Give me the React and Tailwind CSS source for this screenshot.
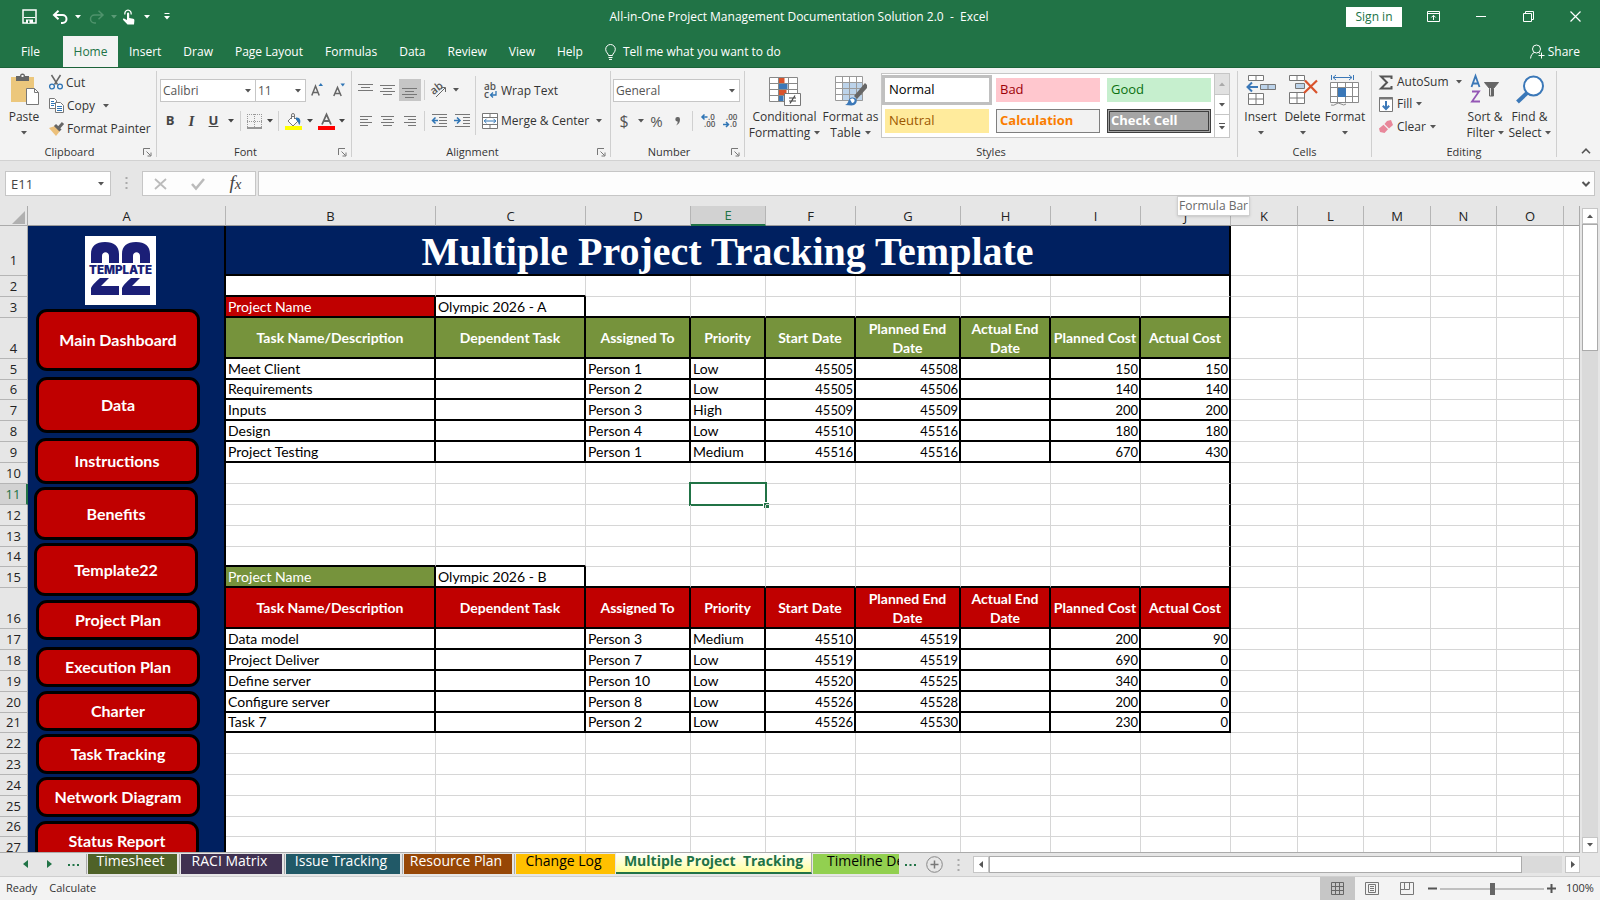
import React from "react";

const Caret = ({ className = "" }) => (
  <svg width="6" height="4" viewBox="0 0 6 4" className={"shrink-0 " + className} fill="currentColor" aria-hidden="true">
    <path d="M0 0h6L3 3.4z" />
  </svg>
);

const Svg = ({ w = 16, h = 16, children, className = "" }) => (
  <svg width={w} height={h} viewBox={`0 0 ${w} ${h}`} fill="none" className={"shrink-0 overflow-visible " + className} aria-hidden="true">
    {children}
  </svg>
);

const Launcher = ({ name }) => (
  <button aria-label={name} className="absolute right-1 bottom-0">
    <Svg w={9} h={9}>
      <path d="M.5 7V.5H7M3.5 3.5l4 4M8 4.5V8H4.500" stroke="#777" />
    </Svg>
  </button>
);

function Group({ label, width, launcher, children }) {
  return (
    <section aria-label={label} className={"relative flex shrink-0 flex-col border-r border-[#cfcfcf] " + width}>
      <div className="flex h-[72px]">{children}</div>
      <div className={"h-[14px] text-center text-[11px] leading-[18px] text-[#333] " + (launcher ? "pr-[17px]" : "")}>{label}</div>
      {launcher && <Launcher name={label + " settings"} />}
    </section>
  );
}

const Sep = ({ className = "h-5" }) => <span className={"w-px shrink-0 bg-[#d0d0d0] " + className} />;

const IconBtn = ({ label, width = "w-[22px]", className = "", children }) => (
  <button aria-label={label} className={"flex h-[22px] shrink-0 items-center justify-center " + width + " " + className}>
    {children}
  </button>
);

const Lines = ({ rows }) => (
  <Svg w={16} h={16}>
    {rows.map(([x1, x2, y], i) => (
      <path key={i} d={`M${x1} ${y + 0.5}H${x2}`} stroke="#777" />
    ))}
  </Svg>
);

function Picker({ label, value, className }) {
  return (
    <label className={"relative block h-[23px] border border-[#c6c6c6] bg-white " + className}>
      <span className="sr-only">{label}</span>
      <select defaultValue={value} className="block h-full w-full appearance-none bg-transparent px-[2px] text-[12px] leading-[18px] text-[#555]">
        <option>{value}</option>
      </select>
      <Caret className="pointer-events-none absolute top-[9px] right-1 text-[#555]" />
    </label>
  );
}

const MENU = ["Insert", "Draw", "Page Layout", "Formulas", "Data", "Review", "View", "Help"];

function TitleBar() {
  return (
    <header className="flex h-[36px] shrink-0 items-center bg-[#217346] text-white">
      <div className="flex w-[340px] items-center pb-[3px] pl-[22px]">
        <button aria-label="Save" className="w-[30px]">
          <Svg w={15} h={15}>
            <path d="M1 1h13v13H1z" stroke="#fff" strokeWidth="1.500" />
            <path d="M2 8.500h11" stroke="#fff" />
            <path d="M4 10.500h7V14H4z" fill="#fff" />
            <path d="M6 11.500h1.500V14H6z" fill="#217346" />
          </Svg>
        </button>
        <button aria-label="Undo" className="flex w-[36px] items-center gap-[6px]">
          <Svg w={17} h={14}>
            <path d="M2 5h8.500a3.800 3.800 0 0 1 0 8H9M6.500.8L2 5l4.500 4.200" stroke="#fff" strokeWidth="2" />
          </Svg>
          <Caret />
        </button>
        <button aria-label="Redo" className="flex w-[34px] items-center gap-[6px] text-[#5a9a76]">
          <Svg w={17} h={14}>
            <path d="M15 5H6.500a3.800 3.800 0 0 0 0 8H8M10.500.8L15 5l-4.500 4.200" stroke="#4f936c" strokeWidth="1.500" />
          </Svg>
          <Caret />
        </button>
        <button aria-label="Touch mode" className="flex w-[42px] items-center gap-2">
          <Svg w={14} h={16}>
            <path d="M3 5.500a3.200 3.200 0 1 1 6 0" stroke="#fff" strokeWidth="1.300" />
            <path d="M5 4.500a1 1 0 0 1 2.200 0V9l4 .8q1.300.3 1.200 1.600L12 15.500H5.500L1.200 11q-.8-1 .2-1.400 1-.3 2 .6L5 11z" fill="#fff" />
          </Svg>
          <Caret />
        </button>
        <button aria-label="Customize toolbar">
          <Svg w={6} h={7}>
            <path d="M.5.5h5" stroke="#fff" />
            <path d="M0 3h6L3 6.500z" fill="#fff" />
          </Svg>
        </button>
      </div>
      <h1 className="flex-1 pb-[2px] text-center text-[12px] whitespace-pre">All-in-One Project Management Documentation Solution 2.0  -  Excel</h1>
      <div className="flex w-[342px] items-center justify-end pb-[3px]">
        <button className="h-[20px] w-[56px] bg-white text-[12px] leading-[18px] text-[#217346]">Sign in</button>
        <button aria-label="Ribbon display options" className="ml-6 flex w-[14px] justify-center">
          <Svg w={13} h={11}>
            <path d="M.5.5h12v10H.5zM.5 2.500h12" stroke="#fff" />
            <path d="M6.500 9V4.500M4.300 6.500l2.200-2.200 2.200 2.200" stroke="#fff" />
          </Svg>
        </button>
        <button aria-label="Minimize" className="ml-[35px] flex w-[12px] justify-center">
          <Svg w={10} h={2}><path d="M0 .5h10" stroke="#fff" /></Svg>
        </button>
        <button aria-label="Restore" className="ml-[35px] flex w-[12px] justify-center">
          <Svg w={11} h={11}><path d="M.5 2.500h8v8h-8zM2.500 2.500v-2h8v8h-2" stroke="#fff" /></Svg>
        </button>
        <button aria-label="Close" className="mr-[19px] ml-[35px] flex w-[12px] justify-center">
          <Svg w={11} h={11}><path d="M.5.5l10 10M10.500.5l-10 10" stroke="#fff" strokeWidth="1.200" /></Svg>
        </button>
      </div>
    </header>
  );
}

function MenuBar() {
  return (
    <nav className="flex h-[31px] shrink-0 items-stretch bg-[#217346] text-[12px] text-white">
      <button className="w-[63px] pr-[2px]">File</button>
      <button className="w-[55px] bg-[#f3f3f3] text-[#217346]">Home</button>
      <div className="flex gap-[22px] pl-[11px]">
        {MENU.map((m) => (
          <button key={m}>{m}</button>
        ))}
      </div>
      <button className="ml-[22px] flex items-center gap-[7px]">
        <Svg w={11} h={16}>
          <path d="M3.500 11.500c0-2-2.800-3-2.800-6.200a4.800 4.800 0 0 1 9.600 0c0 3.200-2.800 4.200-2.800 6.200zM3.500 13.500h4M4 15.400h3" stroke="#fff" />
        </Svg>
        Tell me what you want to do
      </button>
      <button className="mr-5 ml-auto flex items-center gap-[3px]">
        <Svg w={15} h={15}>
          <circle cx="6.500" cy="5" r="4" stroke="#fff" />
          <path d="M.6 14.500c.2-3.500 2-5.500 4-6M8.500 8.500l1.500 1M11.500 8.500v6M8.500 11.500h6" stroke="#fff" />
        </Svg>
        Share
      </button>
    </nav>
  );
}

const Clipboard = () => (
  <Group label="Clipboard" width="w-[157px]" launcher>
    <button className="flex w-[48px] flex-col items-center pt-[2px] text-[12px] leading-[16px] text-[#333]">
      <Svg w={30} h={33} className="mb-[3px]">
        <path d="M2 4h23v25H2z" fill="#ecc77c" />
        <path d="M7 3h4a2.500 2.500 0 0 1 5 0h4v5H7z" fill="#666" />
        <path d="M12.500 2h2v2h-2z" fill="#f3f3f3" />
        <path d="M17.500 15.500h8l4 4v12h-12z" fill="#fff" stroke="#777" />
        <path d="M25.500 15.500v4h4" stroke="#777" />
      </Svg>
      Paste
      <Caret className="mt-[6px] text-[#555]" />
    </button>
    <div className="flex flex-col text-[12px] text-[#333]">
      <button className="flex h-[23px] items-center gap-[3px] pl-px">
        <Svg w={14} h={15}>
          <path d="M2.500 0l6 9.500M11.500 0l-6 9.500" stroke="#666" strokeWidth="1.500" />
          <circle cx="3" cy="11.500" r="2.400" stroke="#2f75b5" strokeWidth="1.300" />
          <circle cx="11" cy="11.500" r="2.400" stroke="#2f75b5" strokeWidth="1.300" />
        </Svg>
        Cut
      </button>
      <button className="flex h-[23px] items-center gap-[3px] pl-px">
        <Svg w={15} h={15}>
          <path d="M.5.500h5l2 2v8h-7z" fill="#fff" stroke="#777" />
          <path d="M2 3.500h3M2 5.500h4M2 7.500h3" stroke="#2f75b5" />
          <path d="M6.500 4.500h5l3 3v7h-8z" fill="#fff" stroke="#777" />
          <path d="M8 8.500h5M8 10.500h5M8 12.500h5" stroke="#2f75b5" />
        </Svg>
        Copy
        <Caret className="ml-[5px] text-[#555]" />
      </button>
      <button className="flex h-[23px] items-center gap-[3px] pl-px">
        <Svg w={15} h={14}>
          <path d="M0 6l6-2 5 5-4 5z" fill="#ecc07a" />
          <path d="M6 3l5.500 5.500M10 5.500L14 1" stroke="#666" strokeWidth="3" />
        </Svg>
        Format Painter
      </button>
    </div>
  </Group>
);

const FontGroup = () => (
  <Group label="Font" width="w-[195px]" launcher>
    <div className="flex flex-col gap-[8px] pt-[8px] pl-[3px]">
      <div className="flex">
        <Picker label="Font name" value="Calibri" className="w-[96px]" />
        <Picker label="Font size" value="11" className="-ml-px w-[51px]" />
        <IconBtn label="Increase font size" width="w-[22px]">
          <Svg w={13} h={15}>
            <path d="M.8 12.500L4.500 3l3.700 9.500M2 9.500h5" stroke="#666" strokeWidth="1.500" />
            <path d="M7.500 3L9.800 0 12 3z" fill="#2f75b5" />
          </Svg>
        </IconBtn>
        <IconBtn label="Decrease font size" width="w-[22px]">
          <Svg w={13} h={15}>
            <path d="M.8 13L4.500 4.500 8.200 13M2 10.500h5" stroke="#666" strokeWidth="1.500" />
            <path d="M7.500.500h4.500L9.800 3.500z" fill="#2f75b5" />
          </Svg>
        </IconBtn>
      </div>
      <div className="flex items-center text-[#444]">
        <IconBtn label="Bold" width="w-[20px]"><b className="text-[13px]">B</b></IconBtn>
        <IconBtn label="Italic" width="w-[23px]"><i className="font-['Liberation_Serif',serif] text-[15px] font-bold">I</i></IconBtn>
        <IconBtn label="Underline" width="w-[21px]"><span className="text-[13px] font-bold underline">U</span></IconBtn>
        <IconBtn label="Underline style" width="w-[14px]"><Caret /></IconBtn>
        <Sep className="mx-[2px] h-5" />
        <IconBtn label="Borders">
          <Svg w={15} h={15}>
            <path d="M.5 0v14M14.500 0v14M7.500 0v14M0 .5h15M0 7.500h15" stroke="#999" strokeDasharray="1 1" />
            <path d="M0 14h15" stroke="#777" strokeWidth="1.500" />
          </Svg>
        </IconBtn>
        <IconBtn label="Border style" width="w-[10px]"><Caret /></IconBtn>
        <Sep className="mx-[3px] h-5" />
        <IconBtn label="Fill color" width="w-[23px]">
          <Svg w={17} h={17}>
            <path d="M3 8l5-5 5 5-5 5z" fill="#fff" stroke="#777" />
            <path d="M6.500 6V2a1.500 1.500 0 0 1 3 0v4" stroke="#777" />
            <path d="M11 4.500c4-.5 5.500 3 3.500 7.500-1.500-1.500-1-4-3.500-5z" fill="#2f75b5" />
            <path d="M0 13h17v4H0z" fill="#ff0" />
          </Svg>
        </IconBtn>
        <IconBtn label="Fill options" width="w-[9px]"><Caret /></IconBtn>
        <IconBtn label="Font color" width="w-[24px]">
          <Svg w={17} h={17}>
            <path d="M4 11.500L8.500 1.500 13 11.500M5.500 8h6" stroke="#666" strokeWidth="1.800" />
            <path d="M0 13h17v4H0z" fill="#f00" />
          </Svg>
        </IconBtn>
        <IconBtn label="Font color options" width="w-[8px]"><Caret /></IconBtn>
      </div>
    </div>
  </Group>
);

const AlignmentGroup = () => (
  <Group label="Alignment" width="w-[259px]" launcher>
    <div className="flex flex-col gap-[9px] pt-[8px] pl-[3px] text-[#555]">
      <div className="flex items-center">
        <IconBtn label="Top align"><Lines rows={[[0, 15, 2], [3, 12, 5], [0, 15, 8]]} /></IconBtn>
        <IconBtn label="Middle align"><Lines rows={[[0, 15, 3], [3, 12, 6], [0, 15, 9], [3, 12, 12]]} /></IconBtn>
        <IconBtn label="Bottom align" className="bg-[#c6c6c6]"><Lines rows={[[0, 15, 6], [3, 12, 9], [0, 15, 12], [3, 12, 15]]} /></IconBtn>
        <Sep className="ml-[3px] h-5" />
        <IconBtn label="Orientation" width="w-[28px]">
          <Svg w={20} h={20}>
            <text x="2" y="12" fontSize="11" fontWeight="600" fill="#555" transform="rotate(-38 8 10)">ab</text>
            <path d="M7 17L16 8M12 7.500h4.500V12" stroke="#666" />
          </Svg>
        </IconBtn>
        <Caret />
      </div>
      <div className="flex items-center">
        <IconBtn label="Align left"><Lines rows={[[2, 14, 3], [2, 10, 6], [2, 14, 9], [2, 10, 12]]} /></IconBtn>
        <IconBtn label="Center"><Lines rows={[[1, 14, 3], [3, 12, 6], [1, 14, 9], [3, 12, 12]]} /></IconBtn>
        <IconBtn label="Align right"><Lines rows={[[2, 14, 3], [6, 14, 6], [2, 14, 9], [6, 14, 12]]} /></IconBtn>
        <Sep className="ml-[3px] h-5" />
        <IconBtn label="Decrease indent" width="w-[28px]">
          <Svg>
            <path d="M1 1.500h15M8 4.500h8M8 7.500h8M8 10.500h8M1 13.500h15" stroke="#777" />
            <path d="M7 7.500H1.500M4.500 4.500l-3 3 3 3" stroke="#2f75b5" strokeWidth="1.500" />
          </Svg>
        </IconBtn>
        <IconBtn label="Increase indent" width="w-[18px]">
          <Svg>
            <path d="M1 1.500h15M9 4.500h7M9 7.500h7M9 10.500h7M1 13.500h15" stroke="#777" />
            <path d="M0 7.500h6M3 4.500l3 3-3 3" stroke="#2f75b5" strokeWidth="1.500" />
          </Svg>
        </IconBtn>
      </div>
    </div>
    <Sep className="mt-[5px] ml-[4px] h-[59px]" />
    <div className="flex flex-col gap-[9px] pt-[8px] pl-[6px] text-[12px] text-[#333]">
      <button className="flex h-[22px] items-center gap-[3px] pt-px">
        <Svg w={16} h={18}>
          <text x="2" y="8" fontSize="10" fontWeight="600" fill="#555">ab</text>
          <text x="2" y="16" fontSize="10" fontWeight="600" fill="#555">c</text>
          <path d="M14 9v4H8.500M11 10.500L8.500 13l2.500 2.500" stroke="#2f75b5" strokeWidth="1.300" />
        </Svg>
        Wrap Text
      </button>
      <button className="flex h-[22px] items-center gap-[3px]">
        <Svg w={16} h={16}>
          <path d="M.5.500h15v15H.5zM.5 4.500h15M.5 11.500h15M8 .5v4M8 11.500v4" fill="#fff" stroke="#777" />
          <path d="M2 8h12M4.500 5.800L2.300 8l2.200 2.200M11.500 5.800L13.700 8l-2.200 2.200" stroke="#2f75b5" />
        </Svg>
        Merge &amp; Center
        <Caret className="ml-1 text-[#555]" />
      </button>
    </div>
  </Group>
);

const NumberGroup = () => (
  <Group label="Number" width="w-[134px]" launcher>
    <div className="flex flex-col gap-[8px] pt-[8px] pl-[2px] text-[#555]">
      <Picker label="Number format" value="General" className="w-[127px]" />
      <div className="flex items-center">
        <IconBtn label="Currency"><span className="text-[16px]">$</span></IconBtn>
        <IconBtn label="Currency options" width="w-[11px]"><Caret /></IconBtn>
        <IconBtn label="Percent" width="w-[21px]"><span className="text-[15px]">%</span></IconBtn>
        <IconBtn label="Comma style">
          <Svg w={6} h={9}><path d="M2.500 0a2.200 2.200 0 0 1 2.500 2.200C5 5 4 7 1 8.500 2.500 6.500 3 5 2.500 4.400a2.200 2.200 0 1 1 0-4.400z" fill="#666" /></Svg>
        </IconBtn>
        <Sep className="mr-[5px] ml-[3px] h-5" />
        <IconBtn label="Increase decimal">
          <Svg w={16} h={18}>
            <text x="7" y="8" fontSize="8" fontWeight="600" fill="#555">.0</text>
            <text x="3" y="15" fontSize="8" fontWeight="600" fill="#555">.00</text>
            <path d="M6.500 5H1M3.500 2.500L1 5l2.500 2.500" stroke="#2f75b5" strokeWidth="1.500" />
          </Svg>
        </IconBtn>
        <IconBtn label="Decrease decimal">
          <Svg w={16} h={18}>
            <text x="3" y="8" fontSize="8" fontWeight="600" fill="#555">.00</text>
            <text x="7" y="15" fontSize="8" fontWeight="600" fill="#555">.0</text>
            <path d="M0 12.500h5.500M3 10l2.500 2.500L3 15" stroke="#2f75b5" strokeWidth="1.500" />
          </Svg>
        </IconBtn>
      </div>
    </div>
  </Group>
);

const BIG = "flex flex-col items-center pt-[4px] text-[12px] leading-[16px] text-[#333]";

const SWATCHES = [
  ["Normal", "pl-[4px] bg-white text-black outline-[3px] outline-[#c0c0c0]"],
  ["Bad", "pl-[4px] bg-[#ffc7ce] text-[#9c0006]"],
  ["Good", "pl-[4px] bg-[#c6efce] text-[#0a7010]"],
  ["Neutral", "pl-[4px] bg-[#ffeb9c] text-[#9c5700]"],
  ["Calculation", "pl-[3px] border border-[#7f7f7f] bg-[#f2f2f2] font-bold text-[#fa7d00]"],
  ["Check Cell", "pl-px border-[3px] border-double border-[#3f3f3f] bg-[#a5a5a5] font-bold text-white"],
];

const StylesGroup = () => (
  <Group label="Styles" width="w-[493px]">
    <button className={BIG + " w-[79px]"}>
      <Svg w={32} h={31} className="mb-[3px]">
        <path d="M.5 2.500h28v24H.5z" fill="#fff" />
        <path d="M9.500 3h6v5h-6zM9.500 14h8v6h-8z" fill="#d9532c" />
        <path d="M9.500 8h9v6h-9zM9.500 20h5v6h-5z" fill="#3b78b8" />
        <path d="M.5 2.500h28v24H.5zM.5 8.500h28M.5 14.500h28M.5 20.500h28M9.500 2.500v24M19.500 2.500v24" stroke="#888" />
        <path d="M15.500 18.500h16v12h-16z" fill="#fff" stroke="#777" />
        <path d="M20 23h7M20 26h7M26 20.500l-5 8" stroke="#444" strokeWidth="1.200" />
      </Svg>
      Conditional
      <span className="flex items-center gap-1">Formatting<Caret className="text-[#555]" /></span>
    </button>
    <button className={BIG + " w-[53px] whitespace-nowrap"}>
      <Svg w={32} h={31} className="mb-[3px]">
        <path d="M.5 1.500h27v24H.5z" fill="#fff" />
        <path d="M7 8h21v18H7z" fill="#bcd3ea" />
        <path d="M.5 1.500h27v24H.5zM.5 7.500h27M.5 13.500h27M.5 19.500h27M7.500 1.500v24M14.500 1.500v24M21.500 1.500v24" stroke="#9a9a9a" />
        <path d="M19 21L30 8l2 2v3L22 24z" fill="#666" />
        <path d="M10 30c3-1 3-4 4.500-6 2-2.500 6-1.500 7 .5 1 2.500-1 6-5 6z" fill="#3b78b8" />
        <path d="M15 24.500c1.500-1.500 4-1 4.500.5s-1 3-2.500 3z" fill="#fff" />
      </Svg>
      Format as
      <span className="flex items-center gap-1">Table<Caret className="text-[#555]" /></span>
    </button>
    <div className="mt-[2px] ml-[4px] flex h-[65px] border border-[#c6c6c6] bg-white">
      <div className="grid grid-cols-3 gap-x-[7px] gap-y-[6px] px-[3px] py-[4px]">
        {SWATCHES.map(([name, cls]) => (
          <button key={name} className={"flex h-[24px] w-[104px] items-center text-[13px] " + cls}>
            {name}
          </button>
        ))}
      </div>
      <div className="flex w-[15px] flex-col divide-y divide-[#c6c6c6] border-l border-[#c6c6c6] text-[#555]">
        <button aria-label="Scroll styles up" className="flex h-[21px] items-center justify-center bg-[#e1e1e1] text-[#aaa]"><Caret className="rotate-180" /></button>
        <button aria-label="Scroll styles down" className="flex h-[20px] items-center justify-center"><Caret /></button>
        <button aria-label="More styles" className="flex flex-1 flex-col items-center justify-center gap-[2px]"><span className="h-px w-[6px] bg-[#555]" /><Caret /></button>
      </div>
    </div>
  </Group>
);

const CellsGroup = () => (
  <Group label="Cells" width="w-[134px]">
    <button className={BIG + " ml-px w-[43px]"}>
      <Svg w={30} h={31} className="mb-[3px]">
        <path d="M2.500.500h15v5h-15zM10 .5v5M2.500 18.500h15v11h-15zM10 18.500v11M2.500 24h15" fill="#fff" stroke="#777" />
        <path d="M14.500 9.500h15v5h-15zM22 9.500v5" fill="#bcd3ea" stroke="#777" />
        <path d="M12 12H1.500M6 7.500L1.500 12 6 16.500" stroke="#3b78b8" strokeWidth="2" />
      </Svg>
      Insert<Caret className="mt-[6px] text-[#555]" />
    </button>
    <button className={BIG + " w-[41px]"}>
      <Svg w={30} h={31} className="mb-[3px]">
        <path d="M1.500.500h15v5h-15zM9 .5v5M1.500 17.500h15v11h-15zM9 17.500v11M1.500 23h15" fill="#fff" stroke="#777" />
        <path d="M7.500 8.500h9v5h-9z" fill="#bcd3ea" stroke="#777" />
        <path d="M17 5.500l12 12.500M29 5.500L16 18" stroke="#d9532c" strokeWidth="2.200" />
      </Svg>
      Delete<Caret className="mt-[6px] text-[#555]" />
    </button>
    <button className={BIG + " w-[44px]"}>
      <Svg w={30} h={31} className="mb-[3px]">
        <path d="M.5 7.500h28v20H.5zM.5 12.500h28M.5 21.500h28M7.500 7.500v20M15.500 7.500v20M22.500 7.500v20" fill="#fff" stroke="#8a8a8a" />
        <path d="M8 13h8v9H8z" fill="#3b78b8" />
        <path d="M1.500 0v5M23.500 0v5M3 2.500h19M6 0L3 2.500 6 5M19 0l3 2.500L19 5" stroke="#3b78b8" />
        <path d="M1 30q3 1 5-1t5 0 5 0" stroke="#8a8a8a" />
      </Svg>
      Format<Caret className="mt-[6px] text-[#555]" />
    </button>
  </Group>
);

const EditingGroup = () => (
  <Group label="Editing" width="w-[185px]">
    <div className="flex w-[90px] flex-col pl-[7px] text-[12px] text-[#333]">
      <button className="flex h-[22px] items-center gap-[4px]">
        <Svg w={14} h={15}><path d="M12.500 4V1.500H2L8 7.500 2 13.500h10.500V11" stroke="#555" strokeWidth="2" /></Svg>
        AutoSum<Caret className="ml-[3px] text-[#555]" />
      </button>
      <button className="flex h-[22px] items-center gap-[4px]">
        <Svg w={14} h={15}>
          <path d="M.5.500h13v14H.5z" fill="#fff" stroke="#777" /><path d="M0 1.500h14" stroke="#777" strokeWidth="2" />
          <path d="M7 4v8M3.800 8.800L7 12l3.200-3.200" stroke="#3b78b8" strokeWidth="2" />
        </Svg>
        Fill<Caret className="text-[#555]" />
      </button>
      <button className="flex h-[23px] items-center gap-[4px]">
        <Svg w={14} h={13}>
          <path d="M8 1l4-1 2 5-4 3.500L5.500 4z" fill="#e8879a" /><path d="M4.500 4.800L9 9.300 5.500 13 1 12 0 8.500z" fill="#e8879a" />
        </Svg>
        Clear<Caret className="text-[#555]" />
      </button>
    </div>
    <button className={BIG + " w-[46px] whitespace-nowrap"}>
      <Svg w={30} h={31} className="mb-[3px]">
        <path d="M1.500 12L5.500 1l4 11M3 8.500h5" stroke="#3b78b8" strokeWidth="1.800" />
        <path d="M2 16.500h7L2 26.500h8" stroke="#9457b5" strokeWidth="1.800" />
        <path d="M14.500 7.500h14l-5 6V21h-4v-7.500z" fill="#666" stroke="#666" /><path d="M20.500 13v7.500" stroke="#ddd" />
      </Svg>
      Sort &amp;
      <span className="flex items-center gap-[3px]">Filter<Caret className="text-[#555]" /></span>
    </button>
    <button className={BIG + " w-[43px] whitespace-nowrap"}>
      <Svg w={30} h={31} className="mb-[3px]">
        <circle cx="18.500" cy="11" r="9.500" fill="#fff" stroke="#3b78b8" strokeWidth="2" />
        <path d="M12 18L2.500 27" stroke="#3b78b8" strokeWidth="4" />
      </Svg>
      Find &amp;
      <span className="flex items-center gap-[3px]">Select<Caret className="text-[#555]" /></span>
    </button>
  </Group>
);

function Ribbon() {
  return (
    <div className="flex h-[94px] shrink-0 border-t border-b border-t-[#1b6339] border-b-[#d2d2d2] bg-[#f3f3f3] pt-[3px] pb-[3px]">
      <Clipboard />
      <FontGroup />
      <AlignmentGroup />
      <NumberGroup />
      <StylesGroup />
      <CellsGroup />
      <EditingGroup />
      <button aria-label="Collapse ribbon" className="mr-[9px] mb-[3px] ml-auto self-end">
        <Svg w={10} h={6}><path d="M1 5.200L5 1.200l4 4" stroke="#555" strokeWidth="1.600" /></Svg>
      </button>
    </div>
  );
}

function FormulaBar() {
  return (
    <div className="flex h-[45px] shrink-0 items-start bg-[#e6e6e6] pt-[10px] pr-[5px] pl-[5px]">
      <label className="relative block h-[25px] w-[106px] border border-[#c6c6c6] bg-white">
        <span className="sr-only">Name box</span>
        <input defaultValue="E11" className="block h-full w-full bg-transparent px-[5px] text-[13px] text-[#444]" />
        <Caret className="pointer-events-none absolute top-[10px] right-[6px] text-[#555]" />
      </label>
      <Svg w={3} h={13} className="mt-[6px] ml-[14px]"><path d="M1.500 0v13" stroke="#aaa" strokeWidth="2" strokeDasharray="2 3" /></Svg>
      <div className="ml-[14px] flex h-[25px] w-[114px] items-center border border-[#c6c6c6] bg-[#fdfdfd]">
        <button aria-label="Cancel" className="flex w-[35px] justify-center">
          <Svg w={13} h={12}><path d="M1 1l11 10M12 1L1 11" stroke="#bbb" strokeWidth="1.800" /></Svg>
        </button>
        <button aria-label="Enter" className="flex w-[40px] justify-center">
          <Svg w={14} h={12}><path d="M1 6l4 4.500L13 1" stroke="#bbb" strokeWidth="2.500" /></Svg>
        </button>
        <button aria-label="Insert function" className="flex-1 pr-[2px] font-['Liberation_Serif',serif] text-[19px] leading-[20px] text-[#444] italic">
          f<span className="text-[15px]">x</span>
        </button>
      </div>
      <div className="relative ml-[2px] flex h-[25px] flex-1 items-center border border-[#c6c6c6] bg-[#fdfdfd]">
        <input aria-label="Formula" className="h-full min-w-0 flex-1 bg-transparent px-2 text-[12px]" />
        <button aria-label="Expand formula bar" className="mr-[4px]">
          <Svg w={8} h={6}><path d="M.5 1L4 4.500 7.500 1" stroke="#555" strokeWidth="2" /></Svg>
        </button>
        <span role="tooltip" className="absolute top-[24px] right-[344px] z-10 h-[20px] border border-[#cfcfcf] bg-white px-px text-[12px] leading-[18px] whitespace-nowrap text-[#6a6a6a] shadow-sm">
          Formula Bar
        </span>
      </div>
    </div>
  );
}

const COLS = [
  ["A", "w-[198px]"], ["B", "w-[210px]"], ["C", "w-[150px]"], ["D", "w-[105px]"], ["E", "w-[75px]"],
  ["F", "w-[90px]"], ["G", "w-[105px]"], ["H", "w-[90px]"], ["I", "w-[90px]"], ["J", "w-[90px]"],
  ["K", "w-[67px]"], ["L", "w-[66px]"], ["M", "w-[67px]"], ["N", "w-[66px]"], ["O", "w-[67px]"],
];

const H20 = "h-[20px]";
const H21 = "h-[21px]";
const H41 = "h-[41px]";
const HEIGHTS = [
  "h-[50px]", H21, H21, H41, H21, H20, H21, H21, H21, H21, H21, H21, H21, H20, H21, H41,
  H21, H21, H21, H21, H20, H21, H21, H21, H21, H20, H21, H21,
];

const HEADINGS = ["Task Name/Description", "Dependent Task", "Assigned To", "Priority", "Start Date", "Planned End Date", "Actual End Date", "Planned Cost", "Actual Cost"];

const DATA = {
  5: ["Meet Client", "", "Person 1", "Low", 45505, 45508, "", 150, 150],
  6: ["Requirements", "", "Person 2", "Low", 45505, 45506, "", 140, 140],
  7: ["Inputs", "", "Person 3", "High", 45509, 45509, "", 200, 200],
  8: ["Design", "", "Person 4", "Low", 45510, 45516, "", 180, 180],
  9: ["Project Testing", "", "Person 1", "Medium", 45516, 45516, "", 670, 430],
  17: ["Data model", "", "Person 3", "Medium", 45510, 45519, "", 200, 90],
  18: ["Project Deliver", "", "Person 7", "Low", 45519, 45519, "", 690, 0],
  19: ["Define server", "", "Person 10", "Low", 45520, 45525, "", 340, 0],
  20: ["Configure server", "", "Person 8", "Low", 45526, 45528, "", 200, 0],
  21: ["Task 7", "", "Person 2", "Low", 45526, 45530, "", 230, 0],
};

const GRID_R = "border-r border-r-[#d6d6d6] ";
const GRID_B = "border-b border-b-[#d6d6d6] ";
const BLACK_R = "border-r-2 border-r-black ";
const BLACK_B = "border-b-2 border-b-black ";

function SheetCells({ row }) {
  if (row === 1) {
    return (
      <td colSpan={9} className={BLACK_R + BLACK_B + "bg-[#002060] px-0 pt-[4px] pb-0 text-center font-['Liberation_Serif',serif] text-[40px] leading-[44px] font-bold text-white"}>
        Multiple Project Tracking Template
      </td>
    );
  }
  const isProject = row === 3 || row === 15;
  const isHeading = row === 4 || row === 16;
  const data = DATA[row];
  return HEADINGS.map((heading, i) => {
    const last = i === 8;
    if (isHeading) {
      return (
        <td key={i} className={BLACK_R + BLACK_B + "p-0 text-center align-middle text-[14px] leading-[19px] font-bold text-white " + (row === 4 ? "bg-[#76933c]" : "bg-[#c00000]")}>
          {heading}
        </td>
      );
    }
    if (data) {
      const numeric = typeof data[i] === "number";
      return (
        <td key={i} className={BLACK_R + BLACK_B + "p-0 align-bottom whitespace-nowrap " + (numeric ? "pr-px text-right text-[13px] leading-[17px]" : "pl-[2px] text-[14px] leading-[18px]")}>
          {data[i]}
        </td>
      );
    }
    if (isProject && i < 2) {
      const fill = i === 1 ? "text-black " : row === 3 ? "bg-[#c00000] text-white " : "bg-[#76933c] text-white ";
      return (
        <td key={i} className={BLACK_R + BLACK_B + fill + "p-0 pl-[2px] align-bottom text-[14px] leading-[18px]"}>
          {i === 0 ? "Project Name" : row === 3 ? "Olympic 2026 - A" : "Olympic 2026 - B"}
        </td>
      );
    }
    const blackBottom = isProject || ((row === 2 || row === 14) && i < 2);
    const selected = row === 11 && i === 3;
    return (
      <td key={i} className={(last && row < 22 ? BLACK_R : GRID_R) + (blackBottom ? BLACK_B : GRID_B) + "relative p-0"}>
        {selected && (
          <span className="absolute -top-[2px] -right-[2px] -bottom-[2px] -left-[2px] border-2 border-[#217346]">
            <span className="absolute -right-[4px] -bottom-[4px] h-[6px] w-[6px] border-t border-l border-white bg-[#217346]" />
          </span>
        )}
      </td>
    );
  });
}

const NAV = [
  ["Main Dashboard", "ml-[8px] h-[62px] mt-[4px]"],
  ["Data", "ml-[8px] h-[56px] mt-[6px]"],
  ["Instructions", "ml-[7px] h-[46px] mt-[5px]"],
  ["Benefits", "ml-[6px] h-[53px] mt-[3px]"],
  ["Template22", "ml-[6px] h-[53px] mt-[3px]"],
  ["Project Plan", "ml-[8px] h-[40px] mt-[4px]"],
  ["Execution Plan", "ml-[8px] h-[40px] mt-[7px]"],
  ["Charter", "ml-[8px] h-[40px] mt-[4px]"],
  ["Task Tracking", "ml-[8px] h-[40px] mt-[3px]"],
  ["Network Diagram", "ml-[8px] h-[40px] mt-[3px]"],
  ["Status Report", "ml-[7px] h-[40px] mt-[4px]"],
];

function Logo() {
  return (
    <svg width="71" height="69" viewBox="0 0 71 69" className="ml-[57px] block bg-white" role="img" aria-label="Template 22">
      {[6, 37].map((x) => (
        <g key={x} transform={`translate(${x} 0)`} fill="#1b1f77">
          <path d="M0 27V18C0 10 5 6 14 6s14 4 14 12v9H18v-7c0-5-7-5-7 0v7z" />
          <path d="M9 42h9l-8 8h18v9H0v-7q1-3 9-10z" />
        </g>
      ))}
      <text x="35.500" y="38" textAnchor="middle" fontFamily="Inter, sans-serif" fontWeight="900" fontSize="11.500" fill="#1b1f77">TEMPLATE</text>
    </svg>
  );
}

function Sidebar() {
  return (
    <div className="flex flex-col items-start pt-[10px]">
      <Logo />
      {NAV.map(([name, cls]) => (
        <button key={name} className={"w-[164px] shrink-0 rounded-[11px] border-[3px] border-black bg-[#c00000] text-[16px] leading-[18px] font-bold text-white " + cls}>
          {name}
        </button>
      ))}
    </div>
  );
}

function Sheet() {
  return (
    <div className="flex min-h-0 flex-1 bg-[#e6e6e6]">
      <div className="min-w-0 flex-1 overflow-hidden border-r border-b border-[#ababab]">
        <table className="w-full table-fixed border-separate border-spacing-0 bg-white font-['Lato',sans-serif] text-black">
          <colgroup>
            <col className="w-[28px]" />
            {COLS.map(([c, w]) => <col key={c} className={w} />)}
            <col />
          </colgroup>
          <thead className="font-['Open_Sans',sans-serif] text-[13px] leading-[18px]">
            <tr>
              <th aria-label="Select all" className="h-[20px] border-r border-b border-[#ababab] bg-[#e6e6e6] p-0">
                <Svg w={13} h={13} className="mt-[3px] ml-[12px]"><path d="M13 0v13H0z" fill="#b0b0b0" /></Svg>
              </th>
              {COLS.map(([c]) => (
                <th key={c} scope="col" className={"h-[20px] border-r border-r-[#b5b5b5] p-0 font-normal " + (c === "E" ? "border-b-2 border-b-[#217346] bg-[#d2d2d2] text-[#217346]" : "border-b border-b-[#9b9b9b] bg-[#e6e6e6] text-[#222]")}>
                  {c}
                </th>
              ))}
              <th className="border-b border-b-[#9b9b9b] bg-[#e6e6e6] p-0" />
            </tr>
          </thead>
          <tbody>
            {HEIGHTS.map((h, idx) => {
              const row = idx + 1;
              return (
                <tr key={row}>
                  <th scope="row" className={h + " border-b border-b-[#b5b5b5] px-0 pt-0 text-center align-bottom font-['Open_Sans',sans-serif] text-[13px] leading-[18px] font-normal " + (row === 11 ? "border-r-2 border-r-[#217346] bg-[#d2d2d2] text-[#217346] " : "border-r border-r-[#ababab] bg-[#e6e6e6] text-[#222] ") + (row === 1 ? "pb-[6px]" : "pb-px")}>
                    {row}
                  </th>
                  {row === 1 && (
                    <td rowSpan={28} className="border-r-2 border-black bg-[#002060] p-0 align-top"><Sidebar /></td>
                  )}
                  <SheetCells row={row} />
                  {["K", "L", "M", "N", "O"].map((c) => <td key={c} className={GRID_R + GRID_B + "p-0"} />)}
                  <td className={GRID_B + "p-0"} />
                </tr>
              );
            })}
          </tbody>
        </table>
      </div>
      <div className="flex w-[20px] flex-col items-center pt-[2px]">
        <button aria-label="Scroll up" className="flex h-[16px] w-[16px] items-center justify-center border border-[#c6c6c6] bg-white text-[#555]"><Caret className="rotate-180" /></button>
        <div className="flex w-[16px] flex-1 flex-col bg-[#dadada]">
          <div className="h-[127px] border border-[#ababab] bg-white" />
        </div>
        <button aria-label="Scroll down" className="flex h-[16px] w-[16px] items-center justify-center border border-[#c6c6c6] bg-white text-[#555]"><Caret /></button>
      </div>
    </div>
  );
}

const TABS = [
  ["Timesheet", "w-[89px] bg-[#4f6228] text-white"],
  ["RACI Matrix", "w-[101px] bg-[#403151] text-white"],
  ["Issue Tracking", "w-[114px] bg-[#215967] text-white"],
  ["Resource Plan", "w-[108px] bg-[#974706] text-white"],
  ["Change Log", "w-[99px] bg-[#ffc000] text-black"],
];

function SheetTabs() {
  return (
    <div className="flex h-[24px] shrink-0 items-start border-b border-[#cfcfcf] bg-[#e6e6e6] text-[#217346]">
      <button aria-label="Previous sheet" className="mt-[7px] ml-[23px]"><Svg w={5} h={8}><path d="M5 0v8L0 4z" fill="#217346" /></Svg></button>
      <button aria-label="Next sheet" className="mt-[7px] ml-[19px]"><Svg w={5} h={8}><path d="M0 0v8l5-4z" fill="#217346" /></Svg></button>
      <button aria-label="More sheets" className="mt-[11px] ml-4"><Svg w={11} h={2}><path d="M0 0h2v2H0zM4.500 0h2v2h-2zM9 0h2v2H9z" fill="#217346" /></Svg></button>
      <div className="ml-[7px] flex gap-[2px] pt-[1px]">
        {TABS.map(([name, cls]) => (
          <div key={name} className="border-l border-[#ababab] pl-px">
            <button className={"flex h-[20px] items-start justify-center pr-[4px] text-[14px] leading-[14px] whitespace-nowrap " + cls}>
              {name}
            </button>
          </div>
        ))}
      </div>
      <button className="ml-px flex h-[21px] w-[196px] items-start justify-center border-r border-b-2 border-r-[#ababab] border-b-[#217346] bg-linear-to-b from-white to-[#ffff99] text-[14px] leading-[16px] font-bold whitespace-pre text-[#217346]">Multiple Project  Tracking</button>
      <button className="mt-px ml-px flex h-[20px] w-[86px] items-start overflow-hidden bg-[#92d050] pl-[14px] text-[14px] leading-[14px] whitespace-nowrap text-black">Timeline Details</button>
      <button aria-label="More sheets right" className="mt-[11px] ml-[6px]"><Svg w={11} h={2}><path d="M0 0h2v2H0zM4.500 0h2v2h-2zM9 0h2v2H9z" fill="#217346" /></Svg></button>
      <button aria-label="New sheet" className="mt-[3px] ml-[10px]">
        <Svg w={17} h={17}><circle cx="8.500" cy="8.500" r="7.800" stroke="#888" /><path d="M8.500 4.500v8M4.500 8.500h8" stroke="#777" strokeWidth="1.500" /></Svg>
      </button>
      <Svg w={3} h={12} className="mt-[6px] ml-[14px]"><path d="M1.500 0v12" stroke="#aaa" strokeWidth="2" strokeDasharray="2 3" /></Svg>
      <div className="mt-[3px] mr-5 ml-[13px] flex h-[17px] flex-1">
        <button aria-label="Scroll left" className="flex w-[16px] items-center justify-center border border-[#c6c6c6] bg-white"><Svg w={4} h={7}><path d="M4 0v7L0 3.500z" fill="#555" /></Svg></button>
        <div className="flex flex-1 bg-[#dadada]"><div className="w-[93%] border border-[#ababab] bg-white" /></div>
        <button aria-label="Scroll right" className="ml-[3px] flex w-[15px] items-center justify-center border border-[#c6c6c6] bg-white"><Svg w={4} h={7}><path d="M0 0v7l4-3.500z" fill="#555" /></Svg></button>
      </div>
    </div>
  );
}

function StatusBar() {
  return (
    <footer className="flex h-[23px] shrink-0 items-center bg-[#f3f3f3] text-[11px] text-[#333]">
      <span className="pl-[6px]">Ready</span>
      <span className="pl-[12px]">Calculate</span>
      <div className="ml-auto flex h-full items-center">
        <button aria-label="Normal view" className="flex h-full w-[35px] items-center justify-center bg-[#c6c6c6]">
          <Svg w={13} h={13}><path d="M.5.500h12v12H.5zM.5 4.500h12M.5 8.500h12M4.500.500v12M8.500.500v12" stroke="#666" /></Svg>
        </button>
        <button aria-label="Page layout view" className="flex h-full w-[34px] items-center justify-center">
          <Svg w={14} h={13}><path d="M.5.500h13v12H.5zM3.500 2.500h7v8h-7zM5 4.500h4M5 6.500h4M5 8.500h4" stroke="#777" /></Svg>
        </button>
        <button aria-label="Page break view" className="flex h-full w-[35px] items-center justify-center">
          <Svg w={14} h={13}><path d="M.5.500h13v12H.5zM4.500.500v7h-4M4.500 7.500h5v-7" stroke="#777" /></Svg>
        </button>
        <button aria-label="Zoom out" className="ml-[4px]"><Svg w={9} h={9}><path d="M0 4.500h9" stroke="#555" strokeWidth="2" /></Svg></button>
        <input type="range" aria-label="Zoom" defaultValue="50" className="mx-[3px] h-[13px] w-[104px] appearance-none bg-transparent [&::-webkit-slider-runnable-track]:h-[2px] [&::-webkit-slider-runnable-track]:bg-[#c0c0c0] [&::-webkit-slider-thumb]:-mt-[5px] [&::-webkit-slider-thumb]:h-[12px] [&::-webkit-slider-thumb]:w-[5px] [&::-webkit-slider-thumb]:appearance-none [&::-webkit-slider-thumb]:bg-[#666]" />
        <button aria-label="Zoom in"><Svg w={9} h={9}><path d="M0 4.500h9M4.500 0v9" stroke="#555" strokeWidth="2" /></Svg></button>
        <span className="w-[44px] pl-[10px]">100%</span>
      </div>
    </footer>
  );
}

export default function App() {
  return (
    <div className="flex h-screen flex-col overflow-hidden bg-[#e6e6e6] font-['Open_Sans','Noto_Sans',sans-serif]">
      <TitleBar />
      <MenuBar />
      <Ribbon />
      <FormulaBar />
      <Sheet />
      <SheetTabs />
      <StatusBar />
    </div>
  );
}
